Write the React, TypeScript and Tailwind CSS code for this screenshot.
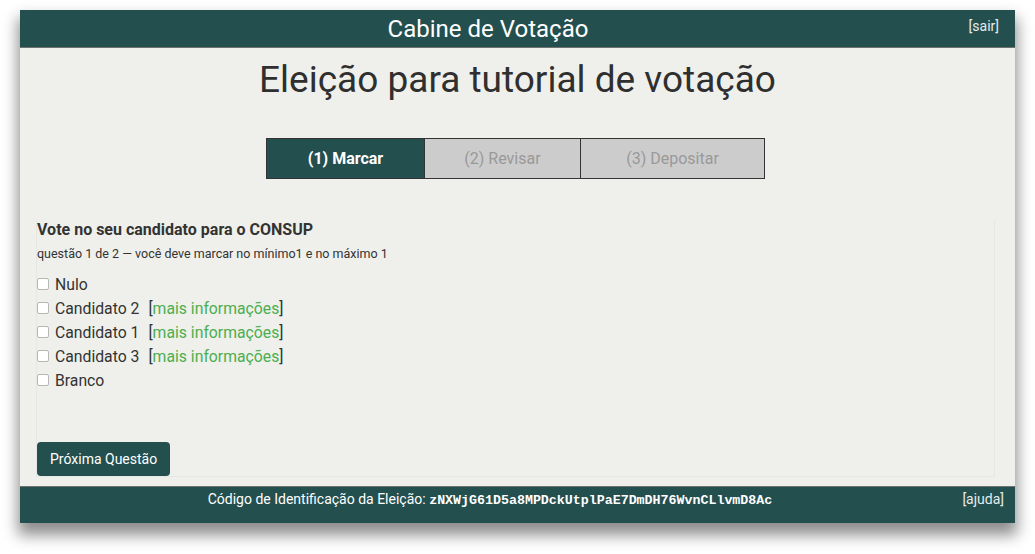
const options = [
  { label: 'Nulo', info: false },
  { label: 'Candidato 2', info: true },
  { label: 'Candidato 1', info: true },
  { label: 'Candidato 3', info: true },
  { label: 'Branco', info: false },
];

export default function App() {
  return (
    <div className="min-h-[554px] bg-white pt-[10px] pl-[20px] font-['Roboto',sans-serif] text-[#333]">
      <div className="w-[995px] h-[513px] flex flex-col bg-[#eff0ec] shadow-[0_10px_14px_2px_rgba(0,0,0,0.45)]">
        {/* cabeçalho */}
        <div className="h-[38px] flex items-center bg-[#244f4f] border-b border-[#6f726f] text-white">
          <div className="w-[936px] text-center text-[24px] leading-[30px]">Cabine de Votação</div>
          <a className="ml-auto mr-[16px] mb-[4px] text-[14px] text-[#e6ecea]">[sair]</a>
        </div>

        <div className="flex-1 flex flex-col">
          <h1 className="mt-[11px] text-center text-[37px] leading-[42px] text-[#2f2f2f]">Eleição para tutorial de votação</h1>

          <div className="mt-[37px] flex justify-center pr-[4px]">
            <div className="flex border border-[#333] text-[16px] h-[41px]">
              <div className="w-[158px] flex items-center justify-center bg-[#244f4f] text-white font-bold border-r border-[#333]">(1) Marcar</div>
              <div className="w-[156px] flex items-center justify-center bg-[#cccccc] text-[#999] border-r border-[#333]">(2) Revisar</div>
              <div className="w-[183px] flex items-center justify-center bg-[#cccccc] text-[#999]">(3) Depositar</div>
            </div>
          </div>

          <div className="mt-[41px] ml-[16px] mr-[20px] flex-1 flex flex-col border-l border-r border-b border-[#e6e7e2]">
            <h3 className="text-[16px] leading-[20px] font-bold text-[#333]">Vote no seu candidato para o CONSUP</h3>
            <div className="mt-[6px] text-[12.5px] leading-[16px] text-[#333]">questão 1 de 2 — você deve marcar no mínimo1 e no máximo 1</div>

            <div className="mt-[11px] flex flex-col">
              {options.map((o) => (
                <label key={o.label} className="flex items-center h-[24px] text-[15.75px] text-[#333]">
                  <span className="mr-[6px] mb-[2px] w-[12px] h-[12px] rounded-[2px] border border-[#b8b8b8] bg-white" />
                  <span>{o.label}</span>
                  {o.info && (
                    <span className="ml-[9px]">
                      [<a className="text-[#4cae4c]">mais informações</a>]
                    </span>
                  )}
                </label>
              ))}
            </div>

            <div className="mt-auto">
              <button className="h-[34px] px-[13px] rounded-[4px] bg-[#244f4f] text-white text-[14px]">Próxima Questão</button>
            </div>
          </div>
          <div className="h-[9px]" />
        </div>

        {/* rodapé */}
        <div className="h-[37px] flex items-start pt-[2px] bg-[#244f4f] border-t border-[#6f726f] text-white text-[14px] leading-[20px]">
          <div className="w-[940px] text-center">
            Código de Identificação da Eleição:{' '}
            <span className="font-['Liberation_Mono',monospace] font-bold text-[13.3px]">zNXWjG61D5a8MPDckUtplPaE7DmDH76WvnCLlvmD8Ac</span>
          </div>
          <a className="ml-auto mr-[11px] text-[#e6ecea]">[ajuda]</a>
        </div>
      </div>
    </div>
  );
}
